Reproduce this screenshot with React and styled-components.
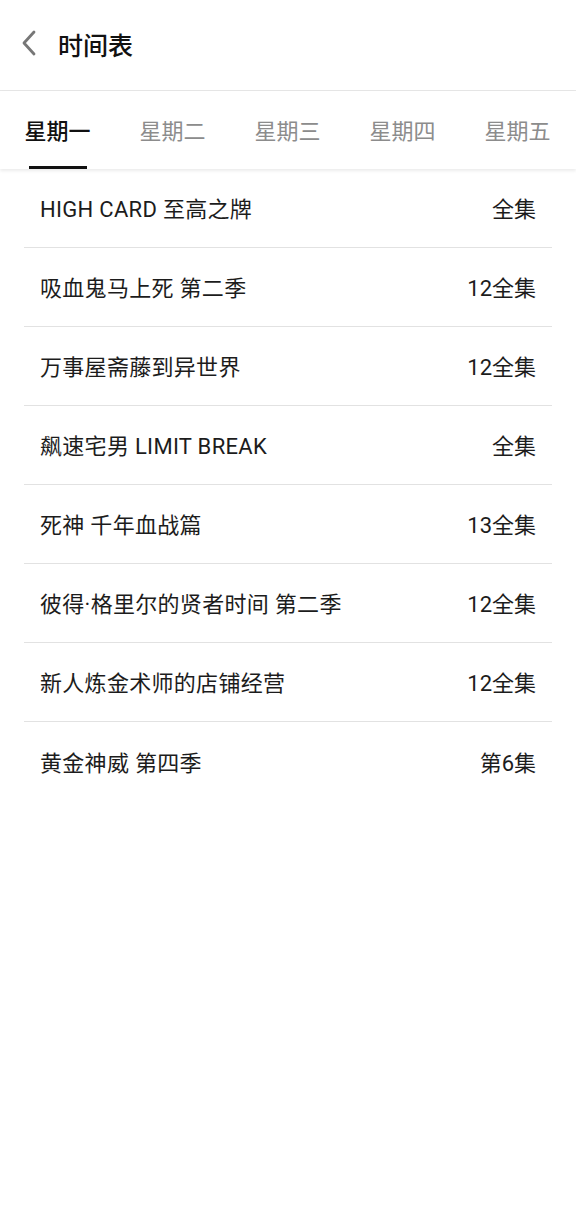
import React, { useState } from "react";
import styled, { createGlobalStyle } from "styled-components";

const GlobalStyle = createGlobalStyle`
  html, body {
    margin: 0;
    padding: 0;
    background: #ffffff;
  }
  body {
    font-family: Roboto, "Noto Sans CJK SC", sans-serif;
    color: #1a1a1a;
  }
`;

const Page = styled.div`
  width: 576px;
  min-height: 1224px;
  background: #fff;
`;

const Header = styled.div`
  height: 91px;
  display: flex;
  align-items: center;
  border-bottom: 1px solid #e6e6e6;
  box-sizing: border-box;
  padding-left: 17px;
`;

const BackButton = styled.button`
  border: none;
  background: none;
  padding: 0;
  width: 24px;
  height: 28px;
  display: flex;
  align-items: center;
  justify-content: center;
  margin-top: -5px;
  cursor: pointer;
`;

const Title = styled.h1`
  margin: -2px 0 0 17px;
  font-size: 25px;
  font-weight: 500;
  color: #111;
`;

const Tabs = styled.div`
  display: flex;
  height: 78px;
  box-shadow: 0 2px 3px rgba(0, 0, 0, 0.08);
  position: relative;
  overflow: hidden;
`;

const Tab = styled.div`
  flex: 0 0 115px;
  display: flex;
  align-items: center;
  justify-content: center;
  position: relative;
  font-size: 22px;
  color: ${(p) => (p.$active ? "#111" : "#8c8c8c")};
  font-weight: ${(p) => (p.$active ? 500 : 400)};
  cursor: pointer;
  margin-top: -3px;

  &::after {
    content: "";
    display: ${(p) => (p.$active ? "block" : "none")};
    position: absolute;
    left: 29px;
    width: 58px;
    bottom: 0;
    height: 3px;
    background: #111;
  }
`;

const List = styled.div`
  margin: 0 24px;
`;

const Row = styled.div`
  height: 79px;
  box-sizing: border-box;
  display: flex;
  align-items: center;
  justify-content: space-between;
  padding: 0 16px 2px;
  border-bottom: ${(p) => (p.$last ? "none" : "1px solid #e2e2e2")};
  font-size: 22px;
  letter-spacing: 0.3px;
  color: #1c1c1c;
`;

const Name = styled.span``;

const Episodes = styled.span`
  letter-spacing: 0;
`;

const days = ["星期一", "星期二", "星期三", "星期四", "星期五"];

const shows = [
  { name: "HIGH CARD 至高之牌", ep: "全集" },
  { name: "吸血鬼马上死 第二季", ep: "12全集" },
  { name: "万事屋斋藤到异世界", ep: "12全集" },
  { name: "飙速宅男 LIMIT BREAK", ep: "全集" },
  { name: "死神 千年血战篇", ep: "13全集" },
  { name: "彼得·格里尔的贤者时间 第二季", ep: "12全集" },
  { name: "新人炼金术师的店铺经营", ep: "12全集" },
  { name: "黄金神威 第四季", ep: "第6集" },
];

export default function App() {
  const [active, setActive] = useState(0);

  return (
    <Page>
      <GlobalStyle />
      <Header>
        <BackButton aria-label="返回">
          <svg width="16" height="26" viewBox="0 0 16 26">
            <path d="M13 2 L3 13 L13 24" fill="none" stroke="#777" strokeWidth="2.8" strokeLinecap="round" strokeLinejoin="round" />
          </svg>
        </BackButton>
        <Title>时间表</Title>
      </Header>
      <Tabs>
        {days.map((d, i) => (
          <Tab key={d} $active={i === active} onClick={() => setActive(i)}>
            {d}
          </Tab>
        ))}
      </Tabs>
      <List>
        {shows.map((s, i) => (
          <Row key={s.name} $last={i === shows.length - 1}>
            <Name>{s.name}</Name>
            <Episodes>{s.ep}</Episodes>
          </Row>
        ))}
      </List>
    </Page>
  );
}
